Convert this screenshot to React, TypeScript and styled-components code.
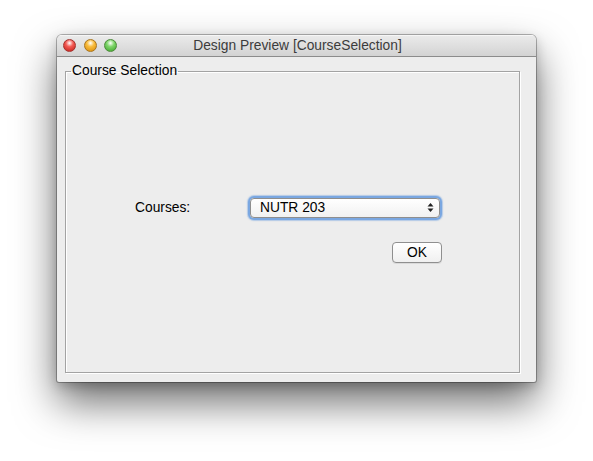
import React from "react";
import styled, { createGlobalStyle } from "styled-components";

const GlobalStyle = createGlobalStyle`
  html, body {
    margin: 0;
    padding: 0;
    background: #ffffff;
  }
  body {
    font-family: "Liberation Sans", Arial, sans-serif;
    font-size: 13.8px;
    color: #000;
  }
`;

const Stage = styled.div`
  width: 593px;
  height: 461px;
  padding: 35px 0 0 57px;
  box-sizing: border-box;
`;

const Window = styled.div`
  width: 479px;
  height: 347px;
  display: flex;
  flex-direction: column;
  border-radius: 5px 5px 2px 2px;
  background: #ededed;
  box-shadow:
    0 0 0 1px rgba(0, 0, 0, 0.28),
    0 20px 42px rgba(0, 0, 0, 0.58),
    0 4px 12px rgba(0, 0, 0, 0.2);
  overflow: hidden;
`;

const TitleBar = styled.div`
  height: 21px;
  flex: none;
  position: relative;
  display: flex;
  align-items: center;
  justify-content: center;
  background: linear-gradient(#ebebeb, #d3d3d3);
  border-bottom: 1px solid #8c8c8c;
  box-shadow: inset 0 1px 0 #f6f6f6;
`;

const Lights = styled.div`
  position: absolute;
  left: 6px;
  top: 4px;
  display: flex;
  gap: 7.5px;
`;

const Light = styled.span<{ $c1: string; $c2: string; $edge: string }>`
  width: 13px;
  height: 13px;
  border-radius: 50%;
  box-sizing: border-box;
  border: 1px solid ${(p) => p.$edge};
  background: radial-gradient(circle at 50% 28%, #ffffff 0%, ${(p) => p.$c1} 38%, ${(p) => p.$c2} 100%);
`;

const Title = styled.span`
  color: #3c3c3c;
  font-size: 13.8px;
  margin-left: 2px;
`;

const Content = styled.div`
  flex: 1;
  display: flex;
  padding: 6px 16px 9px 8px;
`;

const Group = styled.fieldset`
  flex: 1;
  margin: 0;
  padding: 0;
  border: 1px solid #a3a3a3;
  box-shadow: 1px 1px 0 #ffffff, inset 1px 1px 0 #ffffff;
`;

const Legend = styled.legend`
  padding: 0 1px;
  margin-left: 5px;
  line-height: 16px;
  color: #000;
`;

const Form = styled.div`
  display: grid;
  grid-template-columns: 112px 193px;
  grid-template-rows: 21px 21px;
  row-gap: 24px;
  align-content: start;
  padding: 118px 0 0 69px;
`;

const Label = styled.span`
  align-self: center;
`;

const Combo = styled.div`
  margin: 0 0 0 3px;
  height: 18px;
  align-self: center;
  display: flex;
  align-items: center;
  justify-content: space-between;
  padding: 0 5px 0 9px;
  border: 1px solid #8e8e8e;
  border-radius: 4px;
  background: linear-gradient(#ffffff, #f1f1f1);
  box-shadow: 0 0 0 2px #7aa7e1, 0 0 1px 3px rgba(122, 167, 225, 0.5);
`;

const Arrows = () => (
  <svg width="7" height="11" viewBox="0 0 7 11">
    <path d="M3.5 1 L6.5 4.5 L0.5 4.5 Z" fill="#222" />
    <path d="M3.5 10 L6.5 6.5 L0.5 6.5 Z" fill="#222" />
  </svg>
);

const Button = styled.button`
  grid-column: 2;
  justify-self: end;
  width: 50px;
  height: 21px;
  margin-right: -2px;
  padding: 0;
  font-family: inherit;
  font-size: 13.8px;
  color: #000;
  border: 1px solid #8f8f8f;
  border-radius: 4px;
  background: linear-gradient(#ffffff, #f0f0f0);
  box-shadow: 0 1px 0 rgba(0, 0, 0, 0.08);
`;

export default function App() {
  return (
    <>
      <GlobalStyle />
      <Stage>
        <Window>
          <TitleBar>
            <Lights>
              <Light $c1="#f45b55" $c2="#c11c16" $edge="#a3322e" />
              <Light $c1="#f9bd3c" $c2="#d88a09" $edge="#a8741d" />
              <Light $c1="#7fd66a" $c2="#3ca42a" $edge="#4c8a3a" />
            </Lights>
            <Title>Design Preview [CourseSelection]</Title>
          </TitleBar>
          <Content>
            <Group>
              <Legend>Course Selection</Legend>
              <Form>
                <Label>Courses:</Label>
                <Combo>
                  <span>NUTR 203</span>
                  <Arrows />
                </Combo>
                <Button>OK</Button>
              </Form>
            </Group>
          </Content>
        </Window>
      </Stage>
    </>
  );
}
